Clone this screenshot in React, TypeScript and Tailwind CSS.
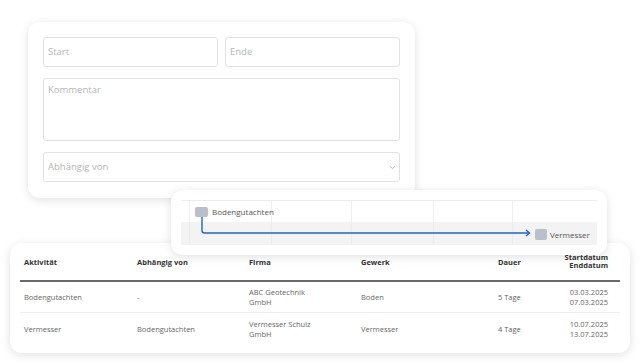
import React from 'react';

// ==========================================
// DATEN
// ==========================================

interface Row {
  aktivitaet: string;
  abhaengig: string;
  firma: string[];
  gewerk: string;
  dauer: string;
  start: string;
  ende: string;
}

const rows: Row[] = [
  {
    aktivitaet: 'Bodengutachten',
    abhaengig: '-',
    firma: ['ABC Geotechnik', 'GmbH'],
    gewerk: 'Boden',
    dauer: '5 Tage',
    start: '03.03.2025',
    ende: '07.03.2025',
  },
  {
    aktivitaet: 'Vermesser',
    abhaengig: 'Bodengutachten',
    firma: ['Vermesser Schulz', 'GmbH'],
    gewerk: 'Vermesser',
    dauer: '4 Tage',
    start: '10.07.2025',
    ende: '13.07.2025',
  },
];

const cols = 'grid grid-cols-[113px_112px_112px_137px_1fr]';

// ==========================================
// FORMULAR
// ==========================================

function FormCard() {
  return (
    <div className="absolute left-[28px] top-[22px] w-[387px] h-[176px] bg-white rounded-[12px] shadow-[0_2px_10px_rgba(0,0,0,0.12)] p-[15px] flex flex-col gap-[11px]">
      <div className="flex gap-[7px]">
        <div className="flex-1 h-[30px] border border-[#e2e2e2] rounded-[3px] px-[4px] flex items-center text-[9.5px] text-[#b5b5b5]">
          Start
        </div>
        <div className="flex-1 h-[30px] border border-[#e2e2e2] rounded-[3px] px-[4px] flex items-center text-[9.5px] text-[#b5b5b5]">
          Ende
        </div>
      </div>
      <div className="h-[63px] border border-[#e2e2e2] rounded-[3px] px-[4px] pt-[4px] text-[9.5px] text-[#b5b5b5]">
        Kommentar
      </div>
      <div className="h-[30px] border border-[#e2e2e2] rounded-[3px] px-[4px] flex items-center justify-between text-[9.5px] text-[#b5b5b5]">
        <span>Abhängig von</span>
        <svg width="7" height="5" viewBox="0 0 7 5" className="mr-[-1px]">
          <path d="M1 1.2 L3.5 3.6 L6 1.2" fill="none" stroke="#b5b5b5" strokeWidth="0.9" />
        </svg>
      </div>
    </div>
  );
}

// ==========================================
// GANTT
// ==========================================

function GanttCard() {
  const lines = ['w-[9px]', 'w-[82px]', 'w-[80px]', 'w-[82px]', 'w-[79px]', 'flex-1'];
  return (
    <div className="absolute left-[171px] top-[190px] w-[436px] h-[65px] bg-white rounded-[12px] shadow-[0_2px_10px_rgba(0,0,0,0.12)] px-[10px] pt-[10px]">
      <div className="relative border-t border-[#ececec]">
        <div className="flex h-[21px]">
          {lines.map((w, i) => (
            <div key={i} className={`${w} border-r border-[#efefef] last:border-r-0`} />
          ))}
        </div>
        <div className="flex h-[23px] bg-[#f3f3f3]">
          {lines.map((w, i) => (
            <div key={i} className={`${w} border-r border-[#ebebeb] last:border-r-0`} />
          ))}
        </div>

        {/* Balken + Verbindung */}
        <div className="absolute left-[14px] top-[6px] flex items-center gap-[4px]">
          <div className="w-[13px] h-[10px] rounded-[2px] bg-[#b9c0c9]" />
          <span className="text-[8px] leading-none text-[#555]">Bodengutachten</span>
        </div>
        <div className="absolute left-[354px] top-[28px] flex items-center gap-[3px]">
          <div className="w-[12px] h-[11px] rounded-[2px] bg-[#b9c0c9]" />
          <span className="text-[8px] leading-none text-[#555]">Vermesser</span>
        </div>
        <svg className="absolute left-0 top-0" width="360" height="44" viewBox="0 0 360 44">
          <path d="M21 16 V29.5 Q21 32 23.5 32 H348" fill="none" stroke="#1f66d1" strokeWidth="1.4" />
          <path d="M345 29 L348.5 32 L345 35" fill="none" stroke="#1f66d1" strokeWidth="1.4" />
        </svg>
      </div>
    </div>
  );
}

// ==========================================
// TABELLE
// ==========================================

function TableCard() {
  return (
    <div className="absolute left-[10px] top-[243px] w-[620px] h-[110px] bg-white rounded-[12px] shadow-[0_2px_10px_rgba(0,0,0,0.12)] px-[10px]">
      <div className={`${cols} h-[39px] items-end pb-[11px] border-b-2 border-[#6a6a6a] text-[7.5px] font-bold text-[#333] leading-[8px]`}>
        <div className="px-[4px] pb-[3px]">Aktivität</div>
        <div className="px-[4px] pb-[3px]">Abhängig von</div>
        <div className="px-[4px] pb-[3px]">Firma</div>
        <div className="px-[4px] pb-[3px]">Gewerk</div>
        <div className="flex justify-between items-end">
          <span className="px-[4px] pb-[3px]">Dauer</span>
          <div className="flex flex-col items-end pr-[12px]">
            <span>Startdatum</span>
            <span>Enddatum</span>
          </div>
        </div>
      </div>
      {rows.map((r, i) => (
        <div
          key={r.aktivitaet}
          className={`${cols} h-[31px] items-center text-[7.5px] text-[#666] leading-[10px] ${i === 0 ? 'border-b border-[#efefef]' : ''}`}
        >
          <div className="px-[4px]">{r.aktivitaet}</div>
          <div className="px-[4px]">{r.abhaengig}</div>
          <div className="px-[4px] flex flex-col">
            <span>{r.firma[0]}</span>
            <span>{r.firma[1]}</span>
          </div>
          <div className="px-[4px]">{r.gewerk}</div>
          <div className="flex justify-between items-center">
            <span className="px-[4px]">{r.dauer}</span>
            <div className="flex flex-col items-end pr-[12px]">
              <span>{r.start}</span>
              <span>{r.ende}</span>
            </div>
          </div>
        </div>
      ))}
    </div>
  );
}

export default function App() {
  return (
    <div className="relative w-[643px] h-[364px] bg-white overflow-hidden font-['Open_Sans',sans-serif]">
      <FormCard />
      <TableCard />
      <GanttCard />
    </div>
  );
}
